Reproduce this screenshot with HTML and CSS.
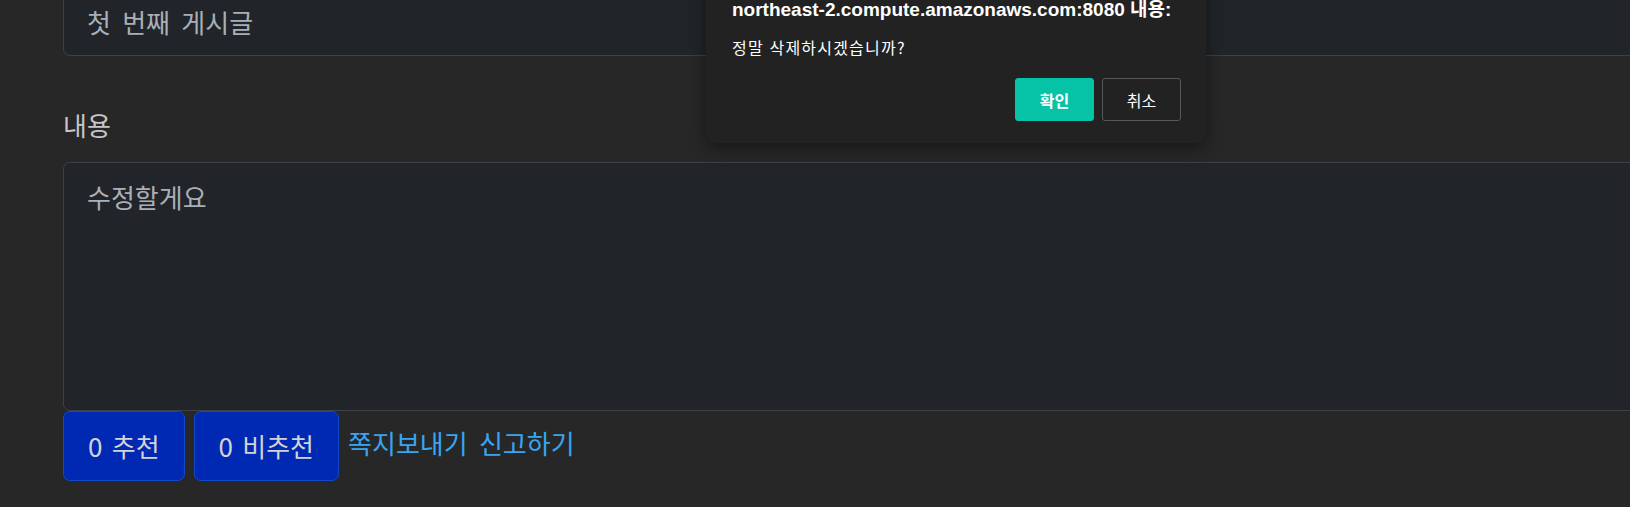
FILE: index.html
```html
<!DOCTYPE html>
<html lang="ko">
<head>
<meta charset="utf-8">
<title>게시글 수정</title>
<link rel="stylesheet" href="styles.css">
</head>
<body>
<main class="page">
  <form class="form">
    <div class="field field-title">
      <input class="control" type="text" value="첫 번째 게시글">
    </div>
    <div class="field field-content">
      <label class="label">내용</label>
      <textarea class="control area">수정할게요</textarea>
    </div>
    <div class="actions">
      <button type="button" class="btn">0 추천</button>
      <button type="button" class="btn">0 비추천</button>
      <span class="links"><a href="#" class="link">쪽지보내기</a> <a href="#" class="link">신고하기</a></span>
    </div>
  </form>
</main>

<div class="dialog" role="dialog">
  <div class="dialog-title">northeast-2.compute.amazonaws.com:8080 내용:</div>
  <div class="dialog-msg">정말 삭제하시겠습니까?</div>
  <div class="dialog-buttons">
    <button type="button" class="dbtn dbtn-ok">확인</button>
    <button type="button" class="dbtn dbtn-cancel">취소</button>
  </div>
</div>
</body>
</html>
```

FILE: styles.css
```css
html, body {
  margin: 0;
  padding: 0;
}

body {
  width: 1630px;
  height: 507px;
  overflow: hidden;
  background: #272727;
  font-family: "Noto Sans CJK KR", "Noto Sans", sans-serif;
  position: relative;
}

.page {
  padding-left: 63px;
  margin-top: -14px;
}

.form {
  width: 1700px;
  display: flex;
  flex-direction: column;
}

.field {
  display: flex;
  flex-direction: column;
}

.control {
  box-sizing: border-box;
  width: 100%;
  margin: 0;
  background: #212529;
  border: 1px solid #3d4147;
  border-radius: 7px;
  color: #a9afb6;
  font-family: inherit;
  font-size: 26px;
  line-height: 36px;
  word-spacing: 4px;
  padding: 16px 23px;
  height: 70px;
  outline: none;
}

.label {
  margin-top: 51px;
  height: 36px;
  line-height: 36px;
  font-size: 26px;
  color: #c6c6c6;
  margin-bottom: 19px;
}

.area {
  height: 249px;
  resize: none;
  display: block;
}

.actions {
  display: flex;
  align-items: flex-start;
  gap: 9px;
}

.btn {
  box-sizing: border-box;
  height: 70px;
  padding: 16px 24px;
  line-height: 36px;
  font-size: 26px;
  word-spacing: 2px;
  font-family: inherit;
  color: #d3d3d3;
  background: #0029b3;
  border: 1px solid #1248cc;
  border-radius: 7px;
}

.links {
  margin-top: 14px;
  font-size: 26px;
  line-height: 36px;
  word-spacing: 4px;
}

.link {
  color: #38a5f3;
  text-decoration: none;
}

.dialog {
  position: absolute;
  left: 706px;
  top: -28px;
  width: 500px;
  box-sizing: border-box;
  padding: 26px 25px 22px 26px;
  background: #222222;
  border-radius: 12px;
  box-shadow: 0 4px 18px rgba(0, 0, 0, 0.45);
  color: #ffffff;
}

.dialog-title {
  font-family: "Liberation Sans", "Noto Sans CJK KR", sans-serif;
  font-weight: bold;
  font-size: 19px;
  line-height: 24px;
  white-space: nowrap;
}

.dialog-msg {
  margin-top: 14px;
  font-size: 16px;
  line-height: 22px;
  letter-spacing: 1.2px;
}

.dialog-buttons {
  margin-top: 20px;
  display: flex;
  justify-content: flex-end;
  gap: 8px;
}

.dbtn {
  box-sizing: border-box;
  width: 79px;
  height: 43px;
  font-family: inherit;
  font-size: 16px;
  color: #ffffff;
  border-radius: 3px;
  padding: 0;
}

.dbtn-ok {
  background: #06c3a8;
  border: 1px solid #06c3a8;
  font-weight: bold;
}

.dbtn-cancel {
  background: #222222;
  border: 1px solid #575757;
}
```
